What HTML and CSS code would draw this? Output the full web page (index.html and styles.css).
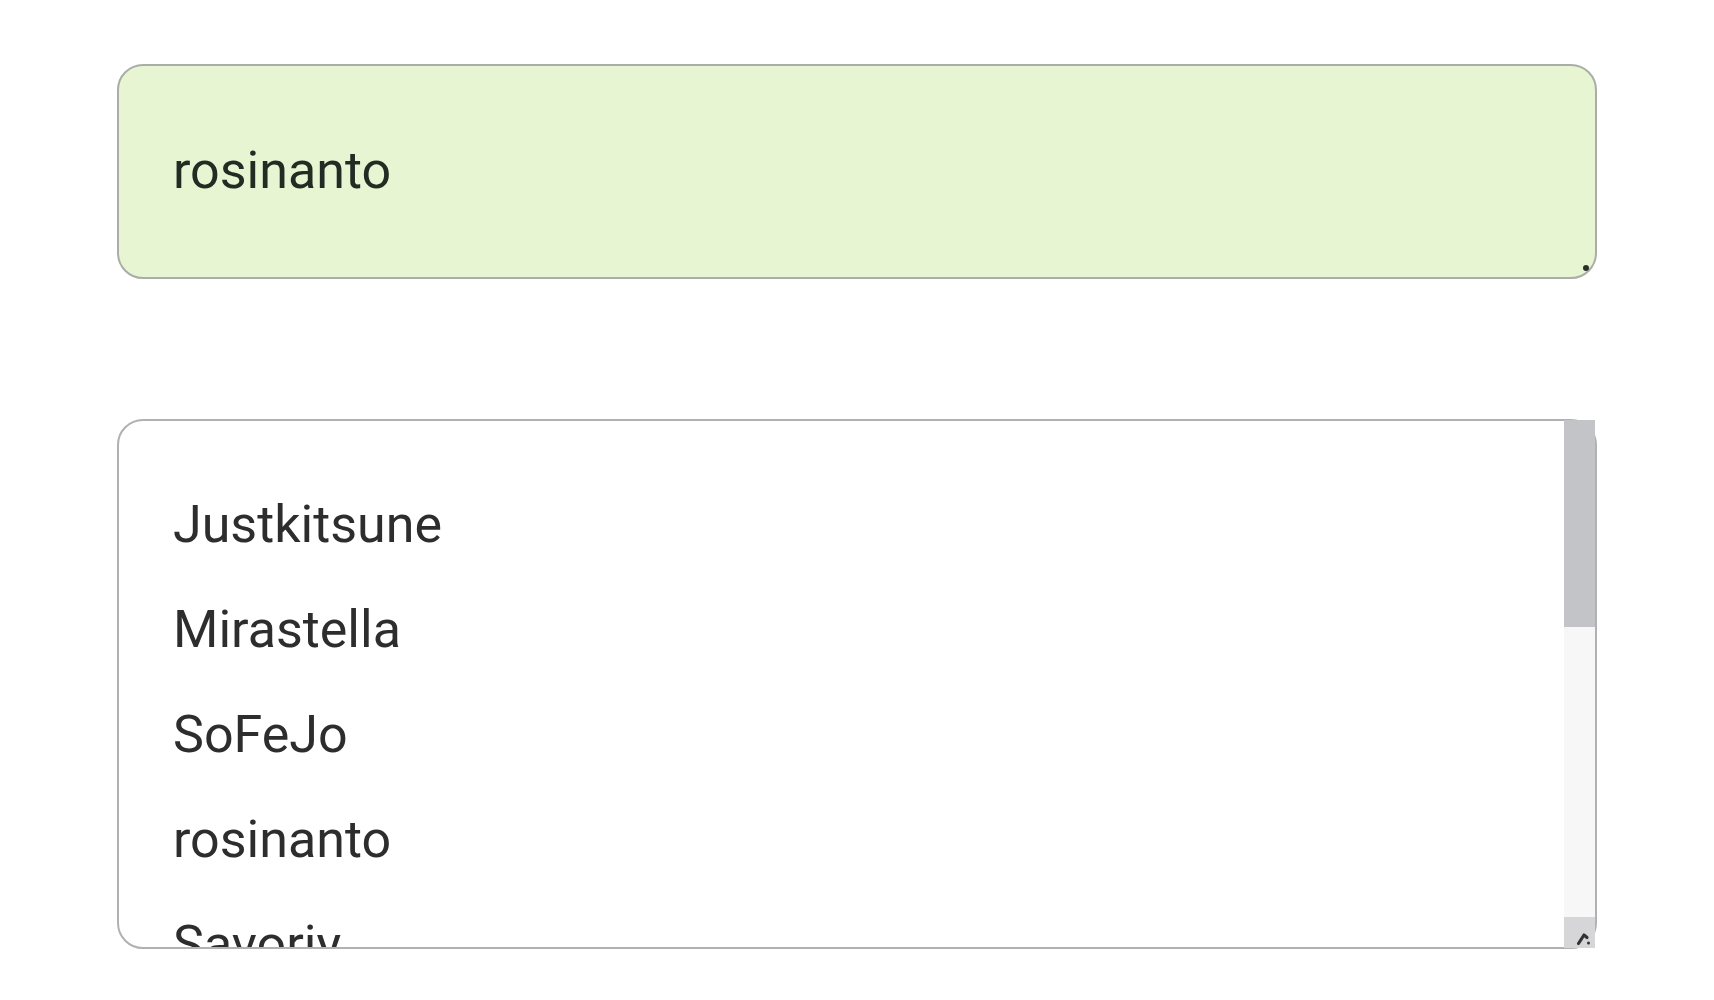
FILE: index.html
```html
<!DOCTYPE html>
<html lang="en">
<head>
    <meta charset="UTF-8">
    <meta name="viewport" content="width=device-width, initial-scale=1.0">
    <title>Names</title>
    <link rel="stylesheet" href="styles.css">
</head>
<body>
    <div class="container">
        <div class="name-field">
            <span class="name-value">rosinanto</span>
            <span class="grip"></span>
        </div>

        <div class="name-list">
            <div class="list-items">
                <div class="item">Justkitsune</div>
                <div class="item">Mirastella</div>
                <div class="item">SoFeJo</div>
                <div class="item">rosinanto</div>
                <div class="item">Savoriy</div>
            </div>
            <div class="scrollbar">
                <div class="thumb"></div>
                <div class="track"></div>
                <div class="corner">
                    <svg width="18" height="18" viewBox="0 0 18 18">
                        <path d="M3.5 15.5 L9 7 L12 9.5" stroke="#333" stroke-width="3.2" fill="none" stroke-linecap="round" stroke-linejoin="round"/>
                        <circle cx="13.5" cy="15" r="1.5" fill="#333"/>
                    </svg>
                </div>
            </div>
        </div>
    </div>
</body>
</html>
```

FILE: styles.css
```css
*{
    margin: 0px;
    padding: 0px;
    box-sizing: border-box;
}

body{
    background: #ffffff;
    font-family: Roboto, "Liberation Sans", sans-serif;
}

.container{
    padding: 64px 117px 0px 117px;
    display: flex;
    flex-direction: column;
    gap: 140px;
}

.name-field{
    position: relative;
    height: 215px;
    background-color: #e7f5d3;
    border: 2px solid #abaea8;
    border-radius: 26px;
    display: flex;
    align-items: center;
    padding: 0px 0px 3px 54px;
}

.name-value{
    font-size: 52px;
    color: #232b22;
}

.grip{
    position: absolute;
    right: 6px;
    bottom: 6px;
    width: 6px;
    height: 6px;
    border-radius: 50%;
    background: #2a2f2a;
}

.name-list{
    height: 530px;
    border: 2px solid #b1b1b1;
    border-radius: 26px;
    display: flex;
    background: #ffffff;
}

.list-items{
    flex: 1;
    overflow: hidden;
    padding: 51px 0px 0px 54px;
    border-radius: 24px 0px 0px 24px;
}

.item{
    font-size: 52px;
    line-height: 105px;
    height: 105px;
    color: #2d2d2d;
}

.scrollbar{
    width: 31px;
    margin: -1px 0px -1px 0px;
    display: flex;
    flex-direction: column;
}

.thumb{
    height: 207px;
    background: #c3c4c7;
}

.track{
    flex: 1;
    background: #f7f7f7;
}

.corner{
    flex: none;
    height: 31px;
    background: #d6d6d8;
    display: flex;
    align-items: flex-end;
    justify-content: flex-end;
    padding: 0px 2px 2px 0px;
}
```
